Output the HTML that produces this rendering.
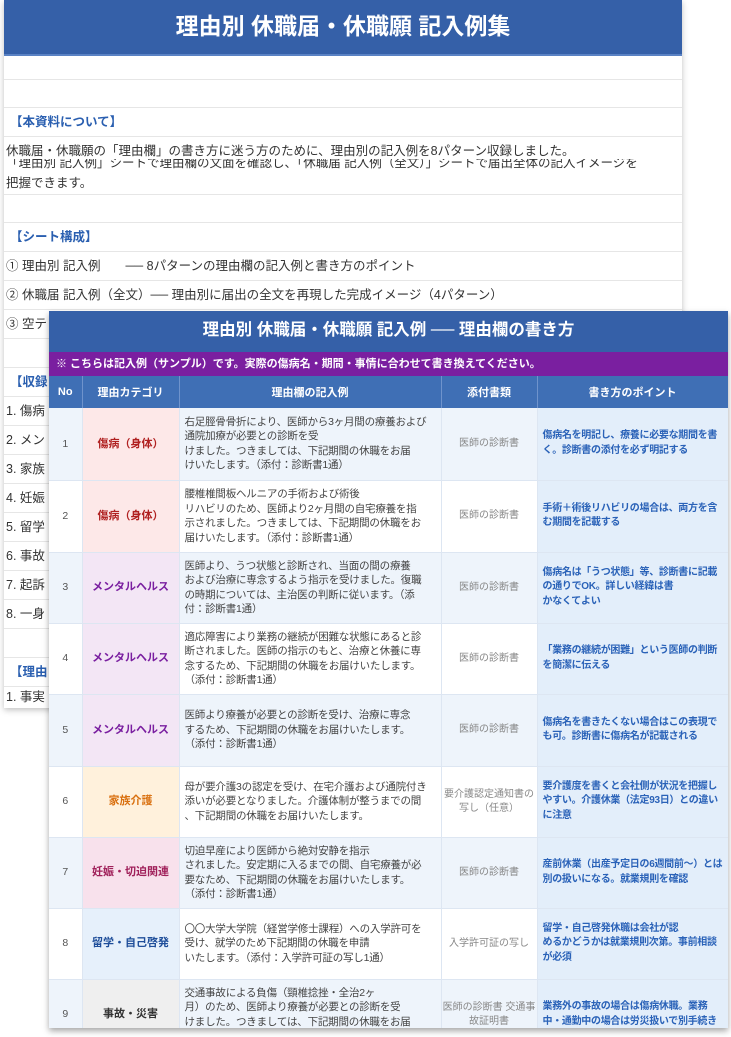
<!DOCTYPE html>
<html><head><meta charset="utf-8"><style>
*{margin:0;padding:0;box-sizing:border-box}
body{width:731px;height:1037px;background:#fff;position:relative;overflow:hidden;font-family:"Liberation Sans","Noto Sans CJK JP",sans-serif}
.back{position:absolute;left:4px;top:0;width:678px;height:708px;background:#fff;box-shadow:0 2px 6px rgba(0,0,0,.25)}
.bh{height:56px;background:#3560a8;color:#fff;font-weight:bold;font-size:23px;text-align:center;line-height:52px;border-bottom:2px solid #5a82c4}
.br{position:absolute;left:0;width:678px;border-bottom:1px solid #e6e6e6;font-size:12.5px;color:#333;padding-left:2px}
.sec{color:#2a5fb0;font-weight:bold;padding-left:6px}
.front{position:absolute;left:49px;top:311px;width:679px;height:717px;background:#fff;box-shadow:0 3px 6px rgba(0,0,0,.35);overflow:hidden}
.fh{height:41px;background:#3560a8;color:#fff;font-weight:bold;font-size:16.5px;text-align:center;line-height:38px}
.pb{height:24px;background:#7a1fa0;color:#fff;font-weight:bold;font-size:11px;line-height:24px;padding-left:7px}
table{border-collapse:collapse;width:679px;table-layout:fixed}
th{background:#3f6fb5;color:#fff;font-size:11px;height:32px;border-right:1px solid #6f93cc}
td{font-size:10.5px;line-height:14.5px;border-right:1px solid #dde6f2;border-bottom:1px solid #dde6f2;vertical-align:middle;color:#444}
td>div{overflow:hidden}
td.n{text-align:center;color:#555}
td.c{text-align:center;font-weight:bold;font-size:11px}
td.t{padding:0 5px;letter-spacing:-0.2px}
td.a{text-align:center;color:#888;font-size:10px;line-height:14px}
td.p{background:#e3eefa;color:#2a62b8;font-weight:bold;font-size:10px;padding:0 5px;line-height:14.5px;letter-spacing:-0.3px}
tr.o td.n,tr.o td.t,tr.o td.a{background:#eef4fb}
</style></head><body>
<div class="back">
<div class="bh">理由別 休職届・休職願 記入例集</div>
<div class="br" style="top:56px;height:24px"></div>
<div class="br" style="top:80px;height:28px"></div>
<div class="br sec" style="top:108px;height:29px;line-height:29px">【本資料について】</div>
<div class="br" style="top:137px;height:58px;line-height:16px;padding-top:6px">休職届・休職願の「理由欄」の書き方に迷う方のために、理由別の記入例を8パターン収録しました。<br><span style="display:inline-block;height:12px;overflow:hidden;vertical-align:top;line-height:8px;padding-top:0">「理由別 記入例」シートで理由欄の文面を確認し、「休職届 記入例（全文）」シートで届出全体の記入イメージを</span><br>把握できます。</div>
<div class="br" style="top:195px;height:28px"></div>
<div class="br sec" style="top:223px;height:29px;line-height:29px">【シート構成】</div>
<div class="br" style="top:252px;height:29px;line-height:29px">① 理由別 記入例　　── 8パターンの理由欄の記入例と書き方のポイント</div>
<div class="br" style="top:281px;height:29px;line-height:29px">② 休職届 記入例（全文）── 理由別に届出の全文を再現した完成イメージ（4パターン）</div>
<div class="br" style="top:310px;height:29px;line-height:29px">③ 空テ</div>
<div class="br" style="top:339px;height:29px"></div>
<div class="br sec" style="top:368px;height:29px;line-height:29px">【収録</div>
<div class="br" style="top:397px;height:29px;line-height:29px">1. 傷病</div>
<div class="br" style="top:426px;height:29px;line-height:29px">2. メン</div>
<div class="br" style="top:455px;height:29px;line-height:29px">3. 家族</div>
<div class="br" style="top:484px;height:29px;line-height:29px">4. 妊娠</div>
<div class="br" style="top:513px;height:29px;line-height:29px">5. 留学</div>
<div class="br" style="top:542px;height:29px;line-height:29px">6. 事故</div>
<div class="br" style="top:571px;height:29px;line-height:29px">7. 起訴</div>
<div class="br" style="top:600px;height:29px;line-height:29px">8. 一身</div>
<div class="br" style="top:629px;height:29px"></div>
<div class="br sec" style="top:658px;height:29px;line-height:29px">【理由</div>
<div class="br" style="top:687px;height:21px;line-height:21px;border:none">1. 事実</div>
</div>
<div class="front">
<div class="fh">理由別 休職届・休職願 記入例 ── 理由欄の書き方</div>
<div class="pb">※ こちらは記入例（サンプル）です。実際の傷病名・期間・事情に合わせて書き換えてください。</div>
<table>
<colgroup><col style="width:33px"><col style="width:97px"><col style="width:262px"><col style="width:96px"><col style="width:191px"></colgroup>
<tr><th>No</th><th>理由カテゴリ</th><th>理由欄の記入例</th><th>添付書類</th><th>書き方のポイント</th></tr>
<tr class="o" style="height:72px"><td class="n">1</td><td class="c" style="background:#fde8e8;color:#b02020">傷病（身体）</td><td class="t">右足脛骨骨折により、医師から3ヶ月間の療養および<br>通院加療が必要との診断を受<br>けました。つきましては、下記期間の休職をお届<br>けいたします。（添付：診断書1通）</td><td class="a">医師の診断書</td><td class="p">傷病名を明記し、療養に必要な期間を書く。診断書の添付を必ず明記する</td></tr>
<tr style="height:72px"><td class="n">2</td><td class="c" style="background:#fde8e8;color:#b02020">傷病（身体）</td><td class="t">腰椎椎間板ヘルニアの手術および術後<br>リハビリのため、医師より2ヶ月間の自宅療養を指<br>示されました。つきましては、下記期間の休職をお<br>届けいたします。（添付：診断書1通）</td><td class="a">医師の診断書</td><td class="p">手術＋術後リハビリの場合は、両方を含む期間を記載する</td></tr>
<tr class="o" style="height:71px"><td class="n">3</td><td class="c" style="background:#f3e6f5;color:#7a1fa0">メンタルヘルス</td><td class="t">医師より、うつ状態と診断され、当面の間の療養<br>および治療に専念するよう指示を受けました。復職<br>の時期については、主治医の判断に従います。（添<br>付：診断書1通）</td><td class="a">医師の診断書</td><td class="p">傷病名は「うつ状態」等、診断書に記載の通りでOK。詳しい経緯は書<br>かなくてよい</td></tr>
<tr style="height:71px"><td class="n">4</td><td class="c" style="background:#f3e6f5;color:#7a1fa0">メンタルヘルス</td><td class="t">適応障害により業務の継続が困難な状態にあると診<br>断されました。医師の指示のもと、治療と休養に専<br>念するため、下記期間の休職をお届けいたします。<br>（添付：診断書1通）</td><td class="a">医師の診断書</td><td class="p">「業務の継続が困難」という医師の判断を簡潔に伝える</td></tr>
<tr class="o" style="height:72px"><td class="n">5</td><td class="c" style="background:#f3e6f5;color:#7a1fa0">メンタルヘルス</td><td class="t">医師より療養が必要との診断を受け、治療に専念<br>するため、下記期間の休職をお届けいたします。<br>（添付：診断書1通）</td><td class="a">医師の診断書</td><td class="p">傷病名を書きたくない場合はこの表現でも可。診断書に傷病名が記載される</td></tr>
<tr style="height:71px"><td class="n">6</td><td class="c" style="background:#fff1dc;color:#d9700f">家族介護</td><td class="t">母が要介護3の認定を受け、在宅介護および通院付き<br>添いが必要となりました。介護体制が整うまでの間<br>、下記期間の休職をお届けいたします。</td><td class="a">要介護認定通知書の写し（任意）</td><td class="p">要介護度を書くと会社側が状況を把握しやすい。介護休業（法定93日）との違いに注意</td></tr>
<tr class="o" style="height:71px"><td class="n">7</td><td class="c" style="background:#f8e1ec;color:#a0205a">妊娠・切迫関連</td><td class="t">切迫早産により医師から絶対安静を指示<br>されました。安定期に入るまでの間、自宅療養が必<br>要なため、下記期間の休職をお届けいたします。<br>（添付：診断書1通）</td><td class="a">医師の診断書</td><td class="p">産前休業（出産予定日の6週間前～）とは別の扱いになる。就業規則を確認</td></tr>
<tr style="height:71px"><td class="n">8</td><td class="c" style="background:#e6f0fb;color:#1f4e9a">留学・自己啓発</td><td class="t">〇〇大学大学院（経営学修士課程）への入学許可を<br>受け、就学のため下記期間の休職を申請<br>いたします。（添付：入学許可証の写し1通）</td><td class="a">入学許可証の写し</td><td class="p">留学・自己啓発休職は会社が認<br>めるかどうかは就業規則次第。事前相談が必須</td></tr>
<tr class="o" style="height:71px"><td class="n">9</td><td class="c" style="background:#efefef;color:#333">事故・災害</td><td class="t">交通事故による負傷（頸椎捻挫・全治2ヶ<br>月）のため、医師より療養が必要との診断を受<br>けました。つきましては、下記期間の休職をお届<br>けいたします。</td><td class="a">医師の診断書 交通事故証明書</td><td class="p">業務外の事故の場合は傷病休職。業務中・通勤中の場合は労災扱いで別手続き</td></tr>
</table>
</div>
</body></html>
